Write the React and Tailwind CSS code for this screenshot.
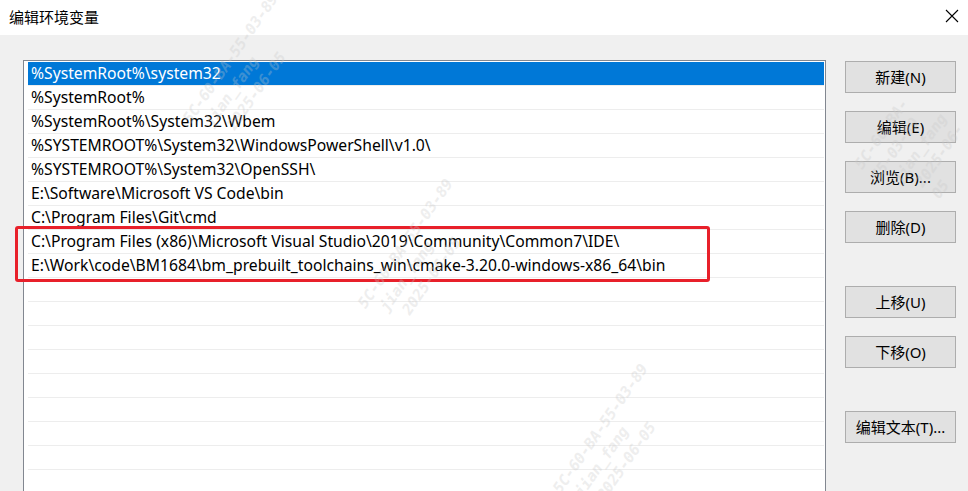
import React from "react";

const paths = [
    "%SystemRoot%\\system32",
    "%SystemRoot%",
    "%SystemRoot%\\System32\\Wbem",
    "%SYSTEMROOT%\\System32\\WindowsPowerShell\\v1.0\\",
    "%SYSTEMROOT%\\System32\\OpenSSH\\",
    "E:\\Software\\Microsoft VS Code\\bin",
    "C:\\Program Files\\Git\\cmd",
    "C:\\Program Files (x86)\\Microsoft Visual Studio\\2019\\Community\\Common7\\IDE\\",
    "E:\\Work\\code\\BM1684\\bm_prebuilt_toolchains_win\\cmake-3.20.0-windows-x86_64\\bin",
    "", "", "", "", "", "", "", "", "",
];

const font = { fontFamily: '"Noto Sans", "Noto Sans CJK SC", sans-serif' };

function Btn({ label, className = "" }) {
    return (
        <button className={`w-[111px] h-[32px] bg-[#e1e1e1] border border-[#adadad] text-[15px] text-black flex items-center justify-center ${className}`}>
            {label}
        </button>
    );
}

// faint diagonal watermark, sits over the dialog
function Watermark({ className }) {
    return (
        <div
            className={`absolute pointer-events-none text-[15px] font-bold italic leading-[20px] text-[#c8c8c8] opacity-30 -rotate-[55deg] ${className}`}
            style={{ fontFamily: '"DejaVu Sans Mono", monospace' }}
        >
            <div>5C-60-BA-55-03-89</div>
            <div className="pl-[10px]">jian_fang</div>
            <div className="pl-[20px]">2025-06-05</div>
        </div>
    );
}

export default function App() {
    return (
        <div className="relative w-[968px] h-[491px] overflow-hidden bg-[#f0f0f0]" style={font}>
            {/* title bar */}
            <div className="h-[35px] bg-white flex items-center justify-between pl-[9px] pr-[9px]">
                <span className="text-[15px] text-black">编辑环境变量</span>
                <svg width="14" height="14" viewBox="0 0 14 14" className="mt-[-4px]">
                    <path d="M1 1L13 13M13 1L1 13" stroke="#000" strokeWidth="1.1" />
                </svg>
            </div>

            <div className="flex pl-[23px] pt-[25px]">
                {/* path list */}
                <div className="w-[803px] h-[460px] bg-white border border-[#828790] pl-[4px] pr-[1px] pt-[1px]">
                    {paths.map((p, i) => (
                        <div
                            key={i}
                            className={`h-[24px] border-b border-[#ededed] pl-[3px] text-[15.7px] leading-[23px] whitespace-nowrap ${i === 0 ? "bg-[#0078d7] text-white" : "text-black"}`}
                        >
                            {p}
                        </div>
                    ))}
                </div>

                {/* buttons */}
                <div className="flex flex-col ml-[19px] pt-[1px]">
                    <Btn label="新建(N)" />
                    <Btn label="编辑(E)" className="mt-[18px]" />
                    <Btn label="浏览(B)..." className="mt-[18px]" />
                    <Btn label="删除(D)" className="mt-[18px]" />
                    <Btn label="上移(U)" className="mt-[43px]" />
                    <Btn label="下移(O)" className="mt-[18px]" />
                    <Btn label="编辑文本(T)..." className="mt-[43px]" />
                </div>
            </div>

            {/* highlight box */}
            <div className="absolute left-[15px] top-[226px] w-[695px] h-[56px] border-[3px] border-[#e8202a] rounded-[3px]" />

            <Watermark className="left-[170px] top-[40px]" />
            <Watermark className="left-[345px] top-[225px]" />
            <Watermark className="left-[540px] top-[410px]" />
            <Watermark className="left-[870px] top-[100px]" />
        </div>
    );
}
